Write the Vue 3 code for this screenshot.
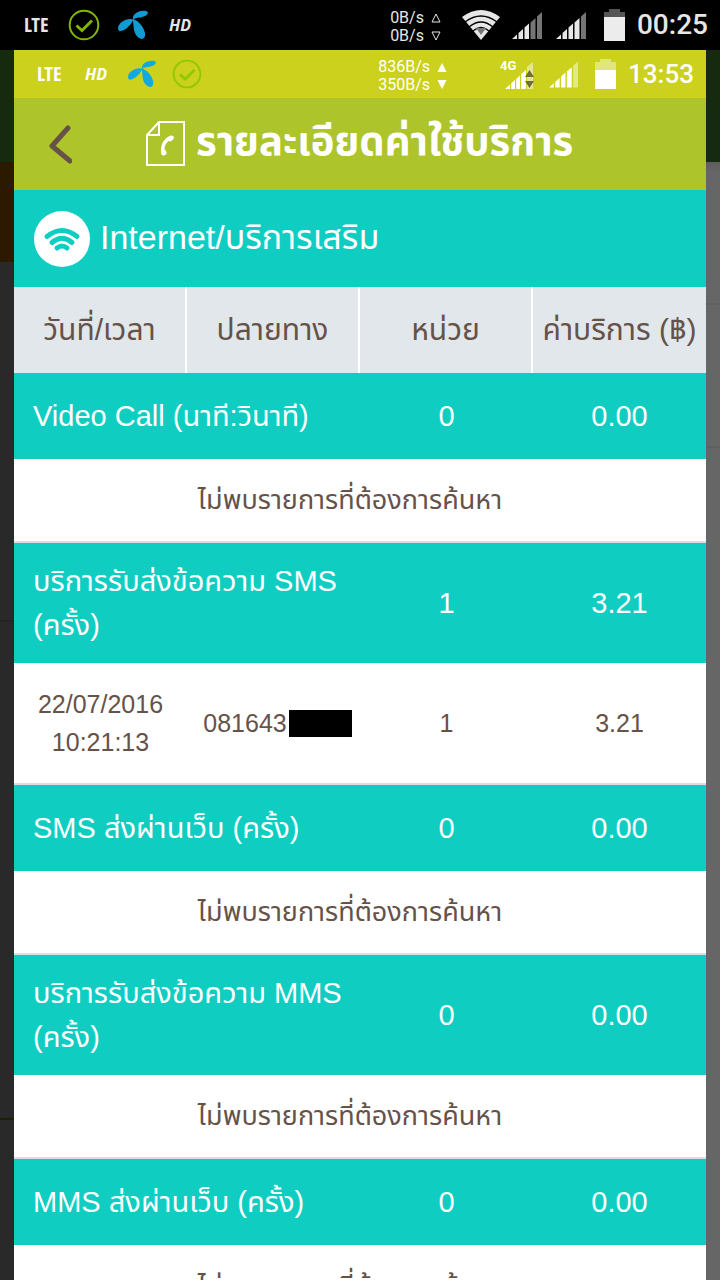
<script setup>
const columns = ['วันที่/เวลา', 'ปลายทาง', 'หน่วย', 'ค่าบริการ (฿)']
const emptyText = 'ไม่พบรายการที่ต้องการค้นหา'
const sections = [
  { title: 'Video Call (นาที:วินาที)', units: '0', cost: '0.00', rows: [] },
  {
    title: 'บริการรับส่งข้อความ SMS (ครั้ง)',
    units: '1',
    cost: '3.21',
    rows: [{ date: '22/07/2016', time: '10:21:13', to: '081643', units: '1', cost: '3.21' }],
  },
  { title: 'SMS ส่งผ่านเว็บ (ครั้ง)', units: '0', cost: '0.00', rows: [] },
  { title: 'บริการรับส่งข้อความ MMS (ครั้ง)', units: '0', cost: '0.00', rows: [] },
  { title: 'MMS ส่งผ่านเว็บ (ครั้ง)', units: '0', cost: '0.00', rows: [] },
]
</script>

<template>
  <div class="screen">
    <header class="status outer">
      <div class="group">
        <span class="lte">LTE</span>
        <svg class="check" viewBox="0 0 32 32"><circle cx="16" cy="16" r="14.3" /><path d="M8.5 16.5 14 21.5 24 11.5" /></svg>
        <svg class="propeller" viewBox="0 0 32 30">
          <path d="M16 9.500C15 4 22 0 29 1C34 3 28 7 22 7.500Q18 8 16 9.500Z" />
          <path d="M16.500 9.500C10 7 1 13 1 18C1 23 6 21 10 18Q14 15 16.500 9.500Z" />
          <path d="M15.500 9C21 10 27 17 28 23C29 31 22 30 19 25C16 20 17 15 15.500 9Z" />
        </svg>
        <span class="hd">HD</span>
      </div>
      <div class="group">
        <div class="speed">
          <span>0B/s <svg viewBox="0 0 10 10"><path class="hollow" d="M5 1 9 9H1Z" /></svg></span>
          <span>0B/s <svg viewBox="0 0 10 10"><path class="hollow" d="M5 9 9 1H1Z" /></svg></span>
        </div>
        <svg class="wifi" viewBox="0 0 38 30">
          <path fill="#e6e6e6" d="M19 30 0 7Q19-7 38 7Z" />
          <g fill="none" stroke="#000" stroke-width="1.4"><path d="M3 12Q19 0 35 12M7 17Q19 7 31 17M11 21Q19 14 27 21" /></g>
          <path fill="#777" d="M14 18H24L19 25Z" />
        </svg>
        <svg class="signal first" viewBox="0 0 30 27">
          <path fill="#e6e6e6" d="M0 27 5 22.500V27ZM6.500 27V21L11 17V27ZM12.500 27V15.500L17 11.500V27Z" />
          <path fill="#757575" d="M18.500 27V10.500L23.500 6V27ZM25 27V4.500L30 0V27Z" />
        </svg>
        <svg class="signal second" viewBox="0 0 30 27">
          <path fill="#e6e6e6" d="M0 27 5 22.500V27ZM6.500 27V21L11 17V27ZM12.500 27V15.500L17 11.500V27ZM18.500 27V10.500L23.500 6V27Z" />
          <path fill="#757575" d="M25 27V4.500L30 0V27Z" />
        </svg>
        <svg class="battery" viewBox="0 0 21 32">
          <path fill="#555" d="M0 3H5V0H16V3H21V9H0Z" /><path fill="#ececec" d="M0 8H21V32H0Z" />
        </svg>
        <time class="clock">00:25</time>
      </div>
    </header>

    <div class="stage">
      <div class="edge left"></div>
      <main class="app">
        <header class="status inner">
          <div class="group">
            <span class="lte">LTE</span>
            <span class="hd">HD</span>
            <svg class="propeller" viewBox="0 0 32 30">
              <path d="M16 9.500C15 4 22 0 29 1C34 3 28 7 22 7.500Q18 8 16 9.500Z" />
              <path d="M16.500 9.500C10 7 1 13 1 18C1 23 6 21 10 18Q14 15 16.500 9.500Z" />
              <path d="M15.500 9C21 10 27 17 28 23C29 31 22 30 19 25C16 20 17 15 15.500 9Z" />
            </svg>
            <svg class="check" viewBox="0 0 32 32"><circle cx="16" cy="16" r="14.3" /><path d="M8.5 16.500 14 21.500 24 11.500" /></svg>
          </div>
          <div class="group">
            <div class="speed">
              <span>836B/s <svg viewBox="0 0 10 10"><path d="M5 1 9.500 10H0.500Z" /></svg></span>
              <span>350B/s <svg viewBox="0 0 10 10"><path d="M5 9 9.500 0H0.500Z" /></svg></span>
            </div>
            <svg class="cell" viewBox="0 0 34 30">
              <path fill="#fff" d="M5 30 10 25.500V30ZM11.200 30V24.500L15 21V30ZM16.200 30V20L20 16.500V30ZM21.200 30V15L26 11V30Z" />
              <path fill="#e3e88c" d="M27 30V8L33 3V30Z" />
              <path fill="#6f702f" d="M25 18 29.500 11 34 18ZM25 22H34L29.500 29Z" />
              <text x="0" y="11">4G</text>
            </svg>
            <svg class="signal" viewBox="0 0 30 27">
              <path fill="#fff" d="M0 27 5 22.500V27ZM6.500 27V21L11 17V27ZM12.500 27V15.500L17 11.500V27ZM18.500 27V10.500L23.500 6V27Z" />
              <path fill="#e3e88c" d="M25 27V4.500L30 0V27Z" />
            </svg>
            <svg class="battery" viewBox="0 0 21 30">
              <path fill="#e0e57c" d="M0 3H5V0H16V3H21V12H0Z" /><path fill="#fff" d="M0 11H21V30H0Z" />
            </svg>
            <time class="clock">13:53</time>
          </div>
        </header>

        <nav class="titlebar">
          <button class="back" type="button" aria-label="ย้อนกลับ">
            <svg viewBox="0 0 24 40"><path d="M20 3 4 21 22 36" /></svg>
          </button>
          <svg class="doc" viewBox="0 0 40 46">
            <path class="line" d="M13 1H38V44H1V14ZM13 1V14H1" />
            <path class="phone" d="M25 14.500C18 17 14.500 23 15 31Q15 35 18 34.500Q21 34 20.500 31Q20 29 18.500 28.500C18.500 25 20 22 22.500 20Q24 21 26 19.500Q28 18 28 16Q27 14 25 14.500Z" />
          </svg>
          <h1>รายละเอียดค่าใช้บริการ</h1>
        </nav>

        <h2 class="category">
          <svg viewBox="0 0 56 56">
            <circle cx="28" cy="28" r="28" fill="#fff" />
            <path d="M13 25.500Q28 13.500 43 25.500M18 31.500Q28 23 38 31.500M23 37Q28 33 33 37" />
          </svg>
          <span>Internet/บริการเสริม</span>
        </h2>

        <table>
          <thead>
            <tr><th v-for="c in columns" :key="c" scope="col">{{ c }}</th></tr>
          </thead>
          <tbody v-for="s in sections" :key="s.title">
            <tr class="section">
              <th colspan="2" scope="rowgroup">{{ s.title }}</th>
              <td>{{ s.units }}</td>
              <td>{{ s.cost }}</td>
            </tr>
            <tr v-if="!s.rows.length" class="empty"><td colspan="4">{{ emptyText }}</td></tr>
            <tr v-for="r in s.rows" :key="r.time" class="entry">
              <td>{{ r.date }}<br />{{ r.time }}</td>
              <td class="target"><span class="number">{{ r.to }}<span class="mask"></span></span></td>
              <td>{{ r.units }}</td>
              <td>{{ r.cost }}</td>
            </tr>
          </tbody>
        </table>
      </main>
      <div class="edge right"></div>
    </div>
  </div>
</template>

<style>
body {
  margin: 0;
  background: #292929;
}
</style>

<style scoped>
.screen {
  display: flex;
  flex-direction: column;
  height: 100vh;
  overflow: hidden;
  font-family: "Liberation Sans", "Noto Sans Thai", sans-serif;
}
.status {
  display: flex;
  justify-content: space-between;
  align-items: center;
  flex: none;
  font-family: Roboto, sans-serif;
  color: #fff;
}
.status svg { display: block; flex: none; }
.group { display: flex; align-items: center; }
.outer { height: 50px; padding: 0 12px 0 24px; background: #000; color: #e6e6e6; }
.inner { height: 48px; padding: 0 12px 0 23px; background: #ccd11e; }
.lte { width: 25px; font: 700 20px/26px "Open Sans Condensed", "Liberation Sans Narrow", sans-serif; }
.hd { font: italic 700 16px/20px "Open Sans", sans-serif; }
.check { width: 32px; height: 32px; fill: none; stroke: #83b600; stroke-width: 2; }
.check path { stroke-width: 3; }
.propeller { width: 32px; height: 30px; fill: #129bd3; }
.outer .check { margin-left: 19px; }
.outer .propeller { margin: 0 20px 0 17px; }
.inner .check { margin-left: 15px; width: 30px; height: 30px; stroke: #91c900; }
.inner .propeller { margin-left: 20px; width: 30px; height: 28px; fill: #12a8e0; }
.inner .hd { margin-left: 23px; }
.speed { display: grid; padding-top: 4px; font-size: 16px; line-height: 18px; }
.speed span { display: flex; align-items: center; gap: 7px; }
.speed svg { width: 10px; height: 10px; fill: currentColor; }
.speed .hollow { fill: none; stroke: currentColor; stroke-width: 1; }
.wifi { width: 38px; height: 30px; margin: 0 12px 0 21px; }
.signal { width: 30px; height: 27px; }
.signal.first { margin-right: 14px; }
.signal.second { margin-right: 18px; }
.battery { width: 21px; height: 32px; }
.inner .battery { height: 30px; margin-left: 17px; }
.inner .signal { margin-left: 15px; width: 29px; }
.cell { width: 34px; height: 30px; margin-left: 53px; }
.cell text { fill: #fff; font: 700 13px Roboto, sans-serif; }
.clock { margin-left: 12px; font-size: 28px; line-height: 32px; font-weight: 500; }
.inner .clock { font-size: 26px; }

.stage {
  flex: 1;
  min-height: 0;
  display: grid;
  grid-template-columns: 14px minmax(0, 1fr) 14px;
}
.left {
  background: linear-gradient(#152a0f 112px, #2b1a00 112px 212px, #292929 212px 570px, #242424 570px 572px, #292929 572px 1068px, #1a2109 1068px 1070px, #292929 1070px);
}
.right {
  background: linear-gradient(#152a0f 112px, #5c5c5c 112px, #666 122px 253px, #606060 253px 255px, #666 255px 396px, #606060 396px 398px, #666 398px);
}
.app { background: #fff; overflow: hidden; }

.titlebar {
  display: grid;
  grid-template-columns: 36px auto 1fr;
  align-items: center;
  height: 92px;
  padding-left: 28px;
  background: #adc42b;
  color: #fff;
}
.back { width: 36px; height: 48px; padding: 2px 6px 0; border: 0; background: none; }
.back svg { display: block; width: 24px; height: 40px; fill: none; stroke: #665248; stroke-width: 5; stroke-linecap: round; stroke-linejoin: round; }
.doc { width: 40px; height: 46px; margin: 0 10px 0 68px; }
.doc .line { fill: none; stroke: #fff; stroke-width: 2; }
.doc .phone { fill: #fff; }
h1 { margin: 0; padding-bottom: 6px; font-size: 40px; line-height: 48px; font-weight: 700; white-space: nowrap; }

.category {
  display: flex;
  align-items: center;
  gap: 10px;
  height: 97px;
  margin: 0;
  padding-left: 20px;
  background: #10cdc2;
  color: #fff;
  font-size: 34px;
  font-weight: 400;
  white-space: nowrap;
}
.category svg { width: 56px; height: 56px; }
.category path { fill: none; stroke: #10cdc2; stroke-width: 5; stroke-linecap: round; }

table {
  width: 100%;
  table-layout: fixed;
  border-collapse: separate;
  border-spacing: 0;
  color: #665248;
  text-align: center;
}
th, td { padding: 0; font-weight: 400; }
thead th { height: 86px; background: #e1e7ea; border-right: 2px solid #fff; font-size: 30px; line-height: 42px; white-space: nowrap; }
thead th:last-child { border-right: 0; }
.section th, .section td {
  box-sizing: border-box;
  height: 86px;
  padding: 16px 0;
  background: #10cdc2;
  color: #fff;
  font-size: 29px;
  line-height: 44px;
}
.section th { padding-left: 19px; text-align: left; }
.empty td, .entry td {
  box-sizing: border-box;
  height: 84px;
  border-bottom: 2px solid #dcdfe0;
  font-size: 27px;
  line-height: 38px;
}
.empty td { padding-right: 20px; }
.entry td { height: 122px; font-size: 25px; }
.entry .target { padding-left: 8px; }
.number { display: inline-flex; align-items: center; gap: 2px; }
.mask { width: 63px; height: 27px; background: #000; }
</style>
